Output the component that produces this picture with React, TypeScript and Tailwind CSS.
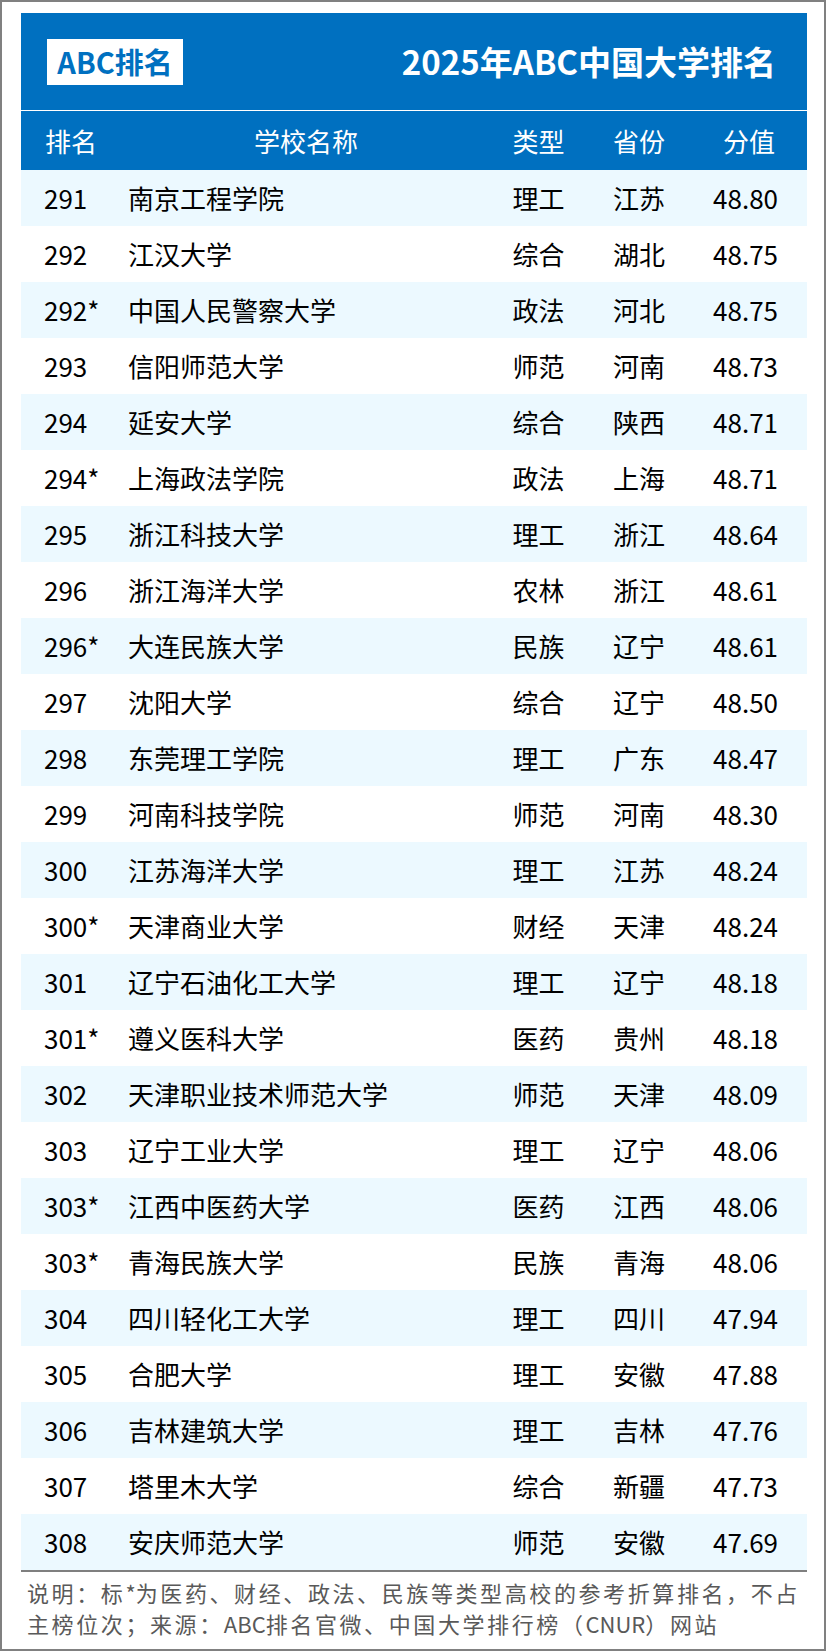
import React from 'react';

type Row = [string, string, string, string, string];

const rows: Row[] = [
  ['291', '南京工程学院', '理工', '江苏', '48.80'],
  ['292', '江汉大学', '综合', '湖北', '48.75'],
  ['292*', '中国人民警察大学', '政法', '河北', '48.75'],
  ['293', '信阳师范大学', '师范', '河南', '48.73'],
  ['294', '延安大学', '综合', '陕西', '48.71'],
  ['294*', '上海政法学院', '政法', '上海', '48.71'],
  ['295', '浙江科技大学', '理工', '浙江', '48.64'],
  ['296', '浙江海洋大学', '农林', '浙江', '48.61'],
  ['296*', '大连民族大学', '民族', '辽宁', '48.61'],
  ['297', '沈阳大学', '综合', '辽宁', '48.50'],
  ['298', '东莞理工学院', '理工', '广东', '48.47'],
  ['299', '河南科技学院', '师范', '河南', '48.30'],
  ['300', '江苏海洋大学', '理工', '江苏', '48.24'],
  ['300*', '天津商业大学', '财经', '天津', '48.24'],
  ['301', '辽宁石油化工大学', '理工', '辽宁', '48.18'],
  ['301*', '遵义医科大学', '医药', '贵州', '48.18'],
  ['302', '天津职业技术师范大学', '师范', '天津', '48.09'],
  ['303', '辽宁工业大学', '理工', '辽宁', '48.06'],
  ['303*', '江西中医药大学', '医药', '江西', '48.06'],
  ['303*', '青海民族大学', '民族', '青海', '48.06'],
  ['304', '四川轻化工大学', '理工', '四川', '47.94'],
  ['305', '合肥大学', '理工', '安徽', '47.88'],
  ['306', '吉林建筑大学', '理工', '吉林', '47.76'],
  ['307', '塔里木大学', '综合', '新疆', '47.73'],
  ['308', '安庆师范大学', '师范', '安徽', '47.69'],
];

const grid = 'grid grid-cols-[100px_370px_95px_106px_115px] items-center';

export default function App() {
  return (
    <div className="w-[829px] h-[1652px] bg-white font-['Noto_Sans_CJK_SC',sans-serif]">
      <div className="w-[826px] h-[1651px] border-2 border-[#808080] pt-[11px] pl-[19px]">
        <div className="w-[786px]">
          {/* title bar */}
          <div className="h-[97px] bg-[#0070C0] flex items-center justify-between pl-[26px] pr-[31px]">
            <div className="w-[136px] h-[46px] bg-white flex items-center justify-center">
              <span className="text-[29px] font-bold text-[#0070C0] leading-none">ABC排名</span>
            </div>
            <span className="text-[33px] font-bold text-white leading-none">2025年ABC中国大学排名</span>
          </div>
          <div className="h-px bg-white" />
          {/* column header */}
          <div className={`${grid} h-[59px] bg-[#0070C0] text-white text-[26px] leading-none`}>
            <div className="pl-[24px]">排名</div>
            <div className="text-center">学校名称</div>
            <div className="text-center">类型</div>
            <div className="text-center">省份</div>
            <div className="text-right pr-[32px]">分值</div>
          </div>
          {/* rows */}
          {rows.map((r, i) => (
            <div
              key={i}
              className={`${grid} h-[56px] text-[26px] leading-none text-black ${i % 2 === 0 ? 'bg-[#ECF9FF]' : 'bg-white'}`}
            >
              <div className="pl-[23px]">{r[0]}</div>
              <div className="pl-[7px]">{r[1]}</div>
              <div className="text-center">{r[2]}</div>
              <div className="text-center">{r[3]}</div>
              <div className="text-right pr-[29px]">{r[4]}</div>
            </div>
          ))}
          <div className="h-[2px] bg-[#7F7F7F]" />
          {/* note */}
          <div className="pt-[5px] pl-[6px] text-[22px] leading-[31px] tracking-[2.6px] text-[#595959] whitespace-nowrap">
            <div>说明：标<span className="tracking-normal">*</span>为医药、财经、政法、民族等类型高校的参考折算排名，不占</div>
            <div>
              主榜位次；来源：<span className="tracking-normal">ABC</span>排名官微、中国大学排行榜（<span className="tracking-normal">CNUR</span>）网站
            </div>
          </div>
        </div>
      </div>
    </div>
  );
}
